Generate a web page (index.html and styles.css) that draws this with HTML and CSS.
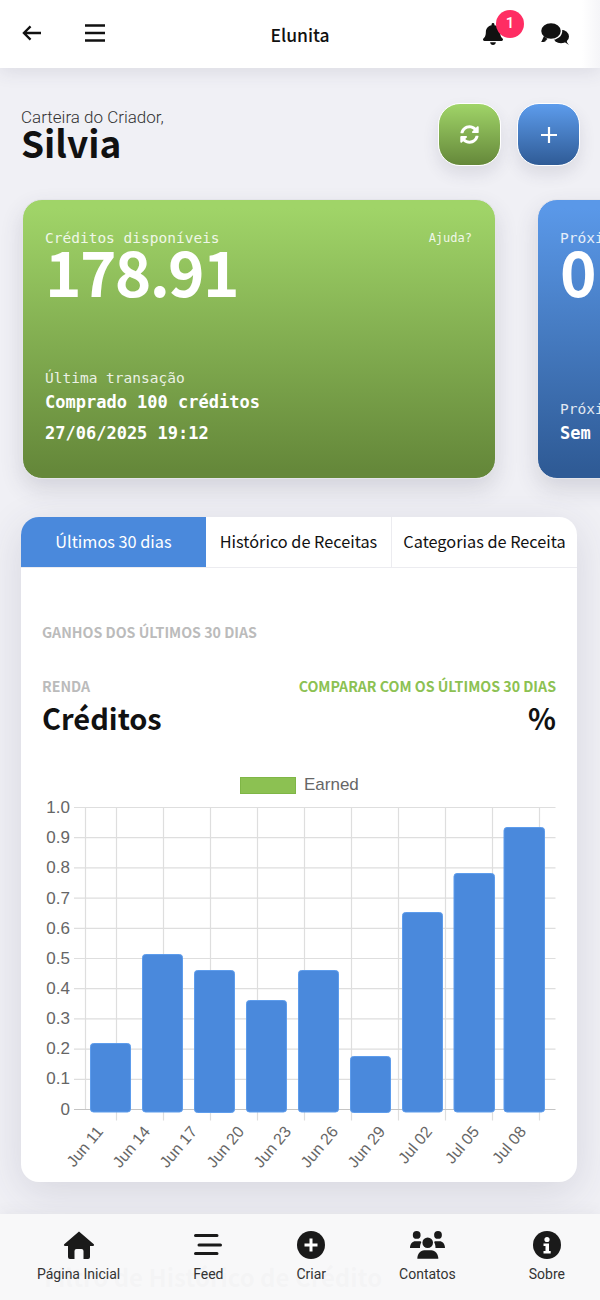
FILE: index.html
```html
<!DOCTYPE html>
<html>
<head>
  <title>Carteira do Criador</title>
  <link rel="stylesheet" href="styles.css">
</head>
<body>
  <div class="app">
    <header class="topbar">
      <div class="topbar-left">
        <svg class="icon-back" viewBox="0 0 20 16"><path d="M20 8H2.500M9 1 2 8l7 7" fill="none" stroke="#111" stroke-width="2.400"/></svg>
        <svg class="icon-menu" viewBox="0 0 20 20"><path d="M0 2.500h20M0 10h20M0 17.500h20" fill="none" stroke="#111" stroke-width="2.600"/></svg>
      </div>
      <div class="topbar-title">Elunita</div>
      <div class="topbar-right">
        <div class="bell">
          <svg class="icon-bell" viewBox="0 0 448 512" preserveAspectRatio="none"><path d="M224 512c35.320 0 63.970-28.650 63.970-64H160.030c0 35.350 28.650 64 63.970 64zm215.390-149.710c-19.320-20.760-55.470-51.990-55.470-154.290 0-77.700-54.480-139.900-127.940-155.160V32c0-17.670-14.320-32-31.980-32s-31.980 14.330-31.980 32v20.840C118.560 68.100 64.080 130.300 64.080 208c0 102.300-36.150 133.530-55.470 154.290-6 6.450-8.660 14.160-8.610 21.710.110 16.400 12.980 32 32.100 32h383.800c19.120 0 32-15.600 32.100-32 .050-7.550-2.610-15.270-8.610-21.710z"/></svg>
          <span class="badge">1</span>
        </div>
        <svg class="icon-chat" viewBox="0 0 28 22">
          <ellipse cx="20" cy="13.500" rx="8" ry="6.800"/>
          <path d="M22 18l6 4c-1.500-1.500-2.200-3-2.500-5z"/>
          <path d="M1.500 17.500 0 19c2 .3 4-.3 5.500-1.500z"/>
          <ellipse cx="10" cy="8" rx="10.500" ry="8.500" stroke="#fff" stroke-width="1.500"/>
          <path d="M3 13 .5 18.500c2.500 0 4.500-.8 6-2.500z"/>
        </svg>
      </div>
    </header>

    <section class="wallet-head">
      <div>
        <div class="wallet-sub">Carteira do Criador,</div>
        <div class="wallet-name">Silvia</div>
      </div>
      <div class="wallet-actions">
        <button class="round-btn green">
          <svg class="icon-sync" viewBox="0 0 512 512"><path fill="#fff" d="M370.720 133.280C339.458 104.008 298.888 87.962 255.848 88c-77.458.068-144.328 53.178-162.791 126.850-1.344 5.363-6.122 9.150-11.651 9.150H24.103c-7.498 0-13.194-6.807-11.807-14.176C33.933 94.924 134.813 8 256 8c66.448 0 126.791 26.136 171.315 68.685L463.030 40.970C478.149 25.851 504 36.559 504 57.941V192c0 13.255-10.745 24-24 24H345.941c-21.382 0-32.090-25.851-16.971-40.971l41.750-41.749zM32 296h134.059c21.382 0 32.090 25.851 16.971 40.971l-41.750 41.750c31.262 29.273 71.835 45.319 114.876 45.280 77.418-.070 144.315-53.144 162.787-126.849 1.344-5.363 6.122-9.150 11.651-9.150h57.304c7.498 0 13.194 6.807 11.807 14.176C478.067 417.076 377.187 504 256 504c-66.448 0-126.791-26.136-171.315-68.685L48.970 471.030C33.851 486.149 8 475.441 8 454.059V320c0-13.255 10.745-24 24-24z"/></svg>
        </button>
        <button class="round-btn blue">
          <svg class="icon-plus" viewBox="0 0 16 16"><path d="M8 0v16M0 8h16" stroke="#fff" stroke-width="2.200"/></svg>
        </button>
      </div>
    </section>

    <section class="cards">
      <div class="credit-card green">
        <div class="card-top">
          <div class="card-label">Créditos disponíveis</div>
          <div class="card-help">Ajuda?</div>
        </div>
        <div class="card-value">178.91</div>
        <div class="card-bottom">
          <div class="card-label">Última transação</div>
          <div class="card-line">Comprado 100 créditos</div>
          <div class="card-line">27/06/2025 19:12</div>
        </div>
      </div>
      <div class="credit-card blue">
        <div class="card-top">
          <div class="card-label">Próximo</div>
        </div>
        <div class="card-value">0</div>
        <div class="card-bottom">
          <div class="card-label">Próximo</div>
          <div class="card-line">Sem</div>
        </div>
      </div>
    </section>

    <section class="panel">
      <div class="tabs">
        <div class="tab active">Últimos 30 dias</div>
        <div class="tab">Histórico de Receitas</div>
        <div class="tab">Categorias de Receita</div>
      </div>
      <div class="panel-body">
        <div class="panel-title">GANHOS DOS ÚLTIMOS 30 DIAS</div>
        <div class="stats">
          <div>
            <div class="stat-label">RENDA</div>
            <div class="stat-value">Créditos</div>
          </div>
          <div class="stats-right">
            <div class="stat-label lime">COMPARAR COM OS ÚLTIMOS 30 DIAS</div>
            <div class="stat-value">%</div>
          </div>
        </div>
      </div>
      <!-- grafico: coordenadas relativas ao painel (x-21, y-768) -->
      <svg class="chart" viewBox="0 0 556 414">
        <rect class="legend-box" x="219.500" y="9.500" width="55" height="16"/>
        <text class="legend-text" x="283" y="22">Earned</text>

        <g class="grid">
          <path d="M53 39.500H534.500M53 69.700H534.500M53 99.900H534.500M53 130.100H534.500M53 160.300H534.500M53 190.500H534.500M53 220.700H534.500M53 250.900H534.500M53 281.100H534.500M53 311.300H534.500"/>
          <path d="M64.500 39.500V341.500M95.500 39.500V352.500M142.500 39.500V352.500M189.500 39.500V352.500M236.500 39.500V352.500M283.500 39.500V352.500M330.500 39.500V352.500M377.500 39.500V352.500M424.500 39.500V352.500M471.500 39.500V352.500M518.500 39.500V352.500"/>
          <path class="zero" d="M53 341.500H534.500"/>
        </g>

        <g class="bars">
          <rect x="69.500" y="275.500" width="40" height="68.500" rx="3"/>
          <rect x="121.500" y="186.500" width="40" height="157.500" rx="3"/>
          <rect x="173.500" y="202.500" width="40" height="142" rx="3"/>
          <rect x="225.500" y="232.500" width="40" height="111.500" rx="3"/>
          <rect x="277.500" y="202.500" width="40" height="141.500" rx="3"/>
          <rect x="329.500" y="288.500" width="40" height="56" rx="3"/>
          <rect x="381.500" y="144.500" width="40" height="199.500" rx="3"/>
          <rect x="433" y="105.500" width="40.500" height="238.500" rx="3"/>
          <rect x="483" y="59.500" width="40.500" height="284.500" rx="3"/>
        </g>

        <g class="y-labels">
          <text x="49" y="45">1.0</text>
          <text x="49" y="75">0.9</text>
          <text x="49" y="105">0.8</text>
          <text x="49" y="135.500">0.7</text>
          <text x="49" y="165.500">0.6</text>
          <text x="49" y="196">0.5</text>
          <text x="49" y="226">0.4</text>
          <text x="49" y="256">0.3</text>
          <text x="49" y="286">0.2</text>
          <text x="49" y="316">0.1</text>
          <text x="49" y="347">0</text>
        </g>

        <g class="x-labels">
          <text transform="translate(83 364) rotate(-50)">Jun 11</text>
          <text transform="translate(130 364) rotate(-50)">Jun 14</text>
          <text transform="translate(177 364) rotate(-50)">Jun 17</text>
          <text transform="translate(224 364) rotate(-50)">Jun 20</text>
          <text transform="translate(271 364) rotate(-50)">Jun 23</text>
          <text transform="translate(318 364) rotate(-50)">Jun 26</text>
          <text transform="translate(365 364) rotate(-50)">Jun 29</text>
          <text transform="translate(412 364) rotate(-50)">Jul 02</text>
          <text transform="translate(459 364) rotate(-50)">Jul 05</text>
          <text transform="translate(506 364) rotate(-50)">Jul 08</text>
        </g>
      </svg>
    </section>

    <div class="next-title">Filtro de Histórico de Crédito</div>

    <nav class="bottom-nav">
      <div class="nav-item">
        <svg viewBox="0 0 31 28" class="nav-icon wide"><path d="M15.500.500.700 13.300C0 14.200.500 15 1.700 15h2.800v11a2 2 0 0 0 2 2H11v-8a2 2 0 0 1 2-2h5a2 2 0 0 1 2 2v8h4.500a2 2 0 0 0 2-2V15h2.800c1.200 0 1.700-.8 1-1.700z"/></svg>
        <span>Página Inicial</span>
      </div>
      <div class="nav-item">
        <svg viewBox="0 0 28 28" class="nav-icon"><path d="M1.500 4.500h21.500M5 14h21.500M1.500 22.500h21.500" fill="none" stroke="#1a1a1a" stroke-width="3" stroke-linecap="round"/></svg>
        <span>Feed</span>
      </div>
      <div class="nav-item">
        <svg viewBox="0 0 28 28" class="nav-icon"><circle cx="14" cy="14" r="14"/><path d="M14 7.500v13M7.500 14h13" stroke="#fff" stroke-width="3"/></svg>
        <span>Criar</span>
      </div>
      <div class="nav-item">
        <svg viewBox="0 0 35 28" class="nav-icon wider">
          <circle cx="6.700" cy="3.900" r="3.900"/><circle cx="28" cy="3.900" r="3.900"/>
          <path d="M0 17c0-4 2.500-6.700 5.500-6.700h4.500c.5 0 1.300.3 1.300 1-.8 1.500-1.300 3.500-1.300 5.700zM35 17c0-4-2.500-6.700-5.500-6.700h-4c-.5 0-1.300.3-1.300 1 .8 1.500 1.300 3.500 1.300 5.700z"/>
          <circle cx="17.700" cy="11.700" r="5.300"/>
          <path d="M7.300 27.800c0-5 3-8.600 7-8.600h7c4 0 7 3.600 7 8.600z"/>
        </svg>
        <span>Contatos</span>
      </div>
      <div class="nav-item">
        <svg viewBox="0 0 28 28" class="nav-icon"><circle cx="14" cy="14" r="14"/><circle cx="14" cy="8.500" r="2.600" fill="#fff"/><path d="M10.500 12.500h5.500v7.500h1.700v2.500h-7.200V20h2v-5h-2z" fill="#fff"/></svg>
        <span>Sobre</span>
      </div>
    </nav>
  </div>
</body>
</html>
```

FILE: styles.css
```css
* {
  box-sizing: border-box;
}

html, body {
  margin: 0;
  padding: 0;
}

body {
  font-family: "Noto Sans CJK SC", "Open Sans", sans-serif;
  color: #111;
  background-color: #f0f0f5;
}

.app {
  position: relative;
  width: 600px;
  height: 1300px;
  overflow: hidden;
  background-color: #f0f0f5;
}

/* barra superior */
.topbar {
  display: flex;
  align-items: center;
  justify-content: space-between;
  height: 68px;
  padding: 0 31px 0 22px;
  background: linear-gradient(90deg, #fff 97%, #f5f5f8);
  box-shadow: 0 3px 18px rgba(60, 60, 90, 0.12);
}

.topbar-left {
  display: flex;
  align-items: center;
  gap: 44px;
  padding-bottom: 2px;
}

.icon-back {
  width: 19px;
  height: 16px;
}

.icon-menu {
  width: 20px;
  height: 20px;
}

.topbar-title {
  position: absolute;
  left: 0;
  right: 0;
  top: 22px;
  text-align: center;
  font-size: 17.500px;
  line-height: 26px;
  font-weight: 500;
}

.topbar-right {
  display: flex;
  align-items: center;
  gap: 38px;
}

.bell {
  position: relative;
  width: 20px;
  height: 22px;
}

.icon-bell {
  display: block;
  width: 20px;
  height: 22px;
  fill: #111;
}

.badge {
  position: absolute;
  left: 13px;
  top: -13px;
  width: 28px;
  height: 28px;
  border-radius: 50%;
  background-color: #ff2d63;
  color: #fff;
  font: 500 15px/27px Roboto, sans-serif;
  text-align: center;
}

.icon-chat {
  width: 28px;
  height: 22px;
  fill: #111;
}

/* cabecalho da carteira */
.wallet-head {
  display: flex;
  justify-content: space-between;
  padding: 35px 20px 0 21px;
  height: 131px;
}

.wallet-sub {
  font: 300 17px/26px Roboto, sans-serif;
  color: #333;
  margin-top: 1px;
}

.wallet-name {
  font-size: 37px;
  line-height: 28px;
  font-weight: 700;
  margin-top: -2px;
}

.wallet-actions {
  display: flex;
  gap: 16px;
  height: 63px;
}

.round-btn {
  display: flex;
  align-items: center;
  justify-content: center;
  width: 63px;
  height: 63px;
  padding: 0;
  border: 1px solid #fff;
  border-radius: 22px;
  box-shadow: 0 8px 16px rgba(60, 60, 90, 0.12);
}

.round-btn.green {
  background: linear-gradient(#a0d468, #65883a);
}

.round-btn.blue {
  background: linear-gradient(#5d9cec, #2f5b96);
}

.icon-sync {
  width: 19px;
  height: 19px;
}

.icon-plus {
  width: 16px;
  height: 16px;
}

/* cartoes de credito */
.cards {
  display: flex;
  gap: 41px;
  padding-left: 22px;
  height: 280px;
}

.credit-card {
  display: flex;
  flex-direction: column;
  flex: 0 0 474px;
  height: 280px;
  padding: 30px 22px 29px;
  border: 1px solid #e4e4ea;
  border-radius: 20px;
  color: #fff;
  font-family: "DejaVu Sans Mono", monospace;
  box-shadow: 0 10px 22px rgba(60, 60, 90, 0.16);
}

.credit-card.green {
  background: linear-gradient(#a0d468 3%, #65883a 97%);
}

.credit-card.blue {
  background: linear-gradient(#5a98e8 3%, #2f5b96 97%);
}

.card-top {
  display: flex;
  justify-content: space-between;
}

.card-label {
  font-size: 14.500px;
  line-height: 17px;
  opacity: 0.85;
}

.card-help {
  font-size: 12px;
  line-height: 17px;
  opacity: 0.85;
  margin-right: 1px;
}

.card-value {
  font-family: "Noto Sans CJK SC", "Open Sans", sans-serif;
  font-size: 62px;
  font-weight: 700;
  letter-spacing: -1.700px;
  line-height: 60px;
  margin-top: -7px;
}

.card-bottom {
  margin-top: auto;
}

.card-line {
  font-size: 17px;
  line-height: 31px;
  font-weight: 700;
}

/* painel */
.panel {
  width: 556px;
  margin: 38px 0 0 21px;
  height: 665px;
  border-radius: 18px;
  background-color: #fff;
  overflow: hidden;
  box-shadow: 0 10px 40px rgba(60, 60, 90, 0.14);
}

.tabs {
  display: flex;
  height: 51px;
  border-bottom: 1px solid #ececf0;
}

.tab {
  flex: 1 1 0;
  text-align: center;
  font-size: 16.300px;
  line-height: 48px;
  border-right: 1px solid #ececf0;
}

.tab:last-child {
  border-right: 0;
}

.tab.active {
  background-color: #4a89dc;
  color: #fff;
  border-right: 0;
}

.panel-body {
  padding: 54px 21px 0;
  height: 216px;
}

.panel-title {
  font-size: 14.200px;
  line-height: 20px;
  font-weight: 700;
  color: #bbb;
}

.stats {
  display: flex;
  justify-content: space-between;
  margin-top: 34px;
}

.stats-right {
  text-align: right;
}

.stat-label {
  font-size: 14.200px;
  line-height: 20px;
  font-weight: 700;
  color: #bbb;
}

.stat-label.lime {
  color: #8cc152;
}

.stat-value {
  font-size: 29px;
  line-height: 42px;
  font-weight: 700;
}

.chart {
  display: block;
  width: 556px;
  height: 414px;
  margin-top: -16px;
  font-family: "Liberation Sans", Arial, sans-serif;
}

.legend-box {
  fill: #8cc152;
  stroke: #7fb646;
}

.legend-text {
  font-size: 17px;
  fill: #666;
}

.grid path {
  fill: none;
  stroke: #dedede;
  stroke-width: 1.200;
}

.grid path.zero {
  stroke: #c4c4c4;
}

.bars rect {
  fill: #4a89dc;
  stroke: #5d9cec;
  stroke-width: 1;
}

.y-labels text {
  font-size: 17px;
  fill: #666;
  text-anchor: end;
}

.x-labels text {
  font-size: 16px;
  fill: #666;
  text-anchor: end;
}

.next-title {
  margin: 78px 0 0 44px;
  font-size: 24px;
  line-height: 34px;
  font-weight: 700;
  color: #111;
}

/* navegacao inferior */
.bottom-nav {
  position: absolute;
  left: 0;
  right: 0;
  bottom: 0;
  height: 86px;
  display: flex;
  justify-content: space-between;
  padding: 17px 22px 0 24px;
  background-color: rgba(248, 248, 249, 0.985);
  box-shadow: 0 -2px 14px rgba(60, 60, 90, 0.06);
}

.nav-item {
  display: flex;
  flex-direction: column;
  align-items: center;
  font: 400 14px/20px Roboto, sans-serif;
  color: #333;
  padding: 0 13px;
}

.nav-icon {
  width: 28px;
  height: 28px;
  fill: #1a1a1a;
  margin-bottom: 5px;
}

.nav-icon.wide {
  width: 32px;
}

.nav-icon.wider {
  width: 35px;
}
```
